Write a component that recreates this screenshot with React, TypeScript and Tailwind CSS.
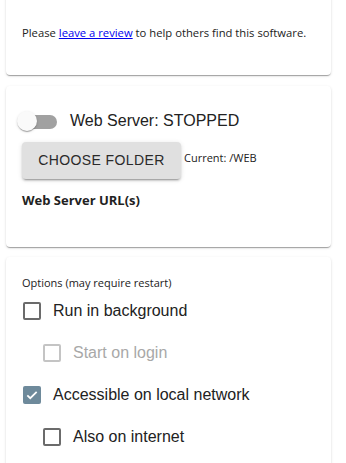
import React from 'react';

const paper =
  'bg-white rounded-[4px] shadow-[0px_2px_1px_-1px_rgba(0,0,0,0.2),0px_1px_1px_0px_rgba(0,0,0,0.14),0px_1px_3px_0px_rgba(0,0,0,0.12)]';

const Check = ({ checked = false, disabled = false }: { checked?: boolean; disabled?: boolean }) => {
  if (checked) {
    return (
      <span className="w-[18px] h-[18px] rounded-[2px] bg-[#6e8a9b] flex items-center justify-center shrink-0">
        <svg width="14" height="14" viewBox="0 0 24 24" fill="none">
          <path d="M4 12.5l5 5L20 6.5" stroke="#fff" strokeWidth="3" />
        </svg>
      </span>
    );
  }
  return (
    <span
      className={
        'w-[18px] h-[18px] rounded-[2px] border-2 shrink-0 ' +
        (disabled ? 'border-[#c4c4c4]' : 'border-[#6b6b6b]')
      }
    />
  );
};

const Option = ({
  label,
  indent = false,
  checked = false,
  disabled = false,
}: {
  label: string;
  indent?: boolean;
  checked?: boolean;
  disabled?: boolean;
}) => (
  <div className={'h-[42px] flex items-center gap-[12px] ' + (indent ? 'pl-[21px]' : 'pl-[1px]')}>
    <Check checked={checked} disabled={disabled} />
    <span className={'text-[16px] ' + (disabled ? 'text-[#a8a8a8]' : 'text-[#222]')}>{label}</span>
  </div>
);

export default function App() {
  return (
    <div
      className="bg-white min-h-screen overflow-hidden text-[#222]"
      style={{ fontFamily: '"Liberation Sans", Arial, sans-serif' }}
    >
      {/* review card, top is scrolled off */}
      <div className={paper + ' ml-[6px] w-[325px] -mt-[10px] h-[85px] px-[16px] pt-[35px]'}>
        <p className="text-[11.25px] leading-[16px] font-['Open_Sans',sans-serif]">
          Please{' '}
          <a href="#" className="text-[#0000ee] underline">
            leave a review
          </a>{' '}
          to help others find this software.
        </p>
      </div>

      {/* web server card */}
      <div className={paper + ' ml-[6px] w-[325px] mt-[11px] h-[161px] px-[16px] pt-[24px]'}>
        <div className="flex items-center h-[22px]">
          <div className="relative w-[47px] h-[22px] -ml-[5px] shrink-0">
            <span className="absolute left-[3px] top-[5px] w-[37px] h-[14px] rounded-full bg-[#a1a1a1]" />
            <span className="absolute left-0 top-[1px] w-[20px] h-[20px] rounded-full bg-[#fafafa] shadow-[0px_2px_1px_-1px_rgba(0,0,0,0.2),0px_1px_1px_0px_rgba(0,0,0,0.14),0px_1px_3px_0px_rgba(0,0,0,0.12)]" />
          </div>
          <span className="text-[16px] ml-[6px]">Web Server: STOPPED</span>
        </div>
        <div className="flex items-start mt-[10px]">
          <button className="h-[37px] w-[159px] rounded-[4px] bg-[#e0e0e0] text-[14px] text-[#2a2a2a] tracking-[0.4px] shadow-[0px_3px_1px_-2px_rgba(0,0,0,0.2),0px_2px_2px_0px_rgba(0,0,0,0.14),0px_1px_5px_0px_rgba(0,0,0,0.12)]">
            CHOOSE FOLDER
          </button>
          <span className="ml-[3px] mt-[8px] text-[11px] leading-[16px] font-['Open_Sans',sans-serif]">
            Current: /WEB
          </span>
        </div>
        <div className="mt-[12px] text-[13px] font-bold font-['Open_Sans',sans-serif]">Web Server URL(s)</div>
      </div>

      {/* options card */}
      <div className={paper + ' ml-[6px] w-[325px] mt-[10px] h-[230px] px-[16px] pt-[18px]'}>
        <div className="text-[11px] leading-[16px] font-['Open_Sans',sans-serif]">Options (may require restart)</div>
        <div className="-mt-[1px]">
          <Option label="Run in background" />
          <Option label="Start on login" indent disabled />
          <Option label="Accessible on local network" checked />
          <Option label="Also on internet" indent />
        </div>
      </div>
    </div>
  );
}
